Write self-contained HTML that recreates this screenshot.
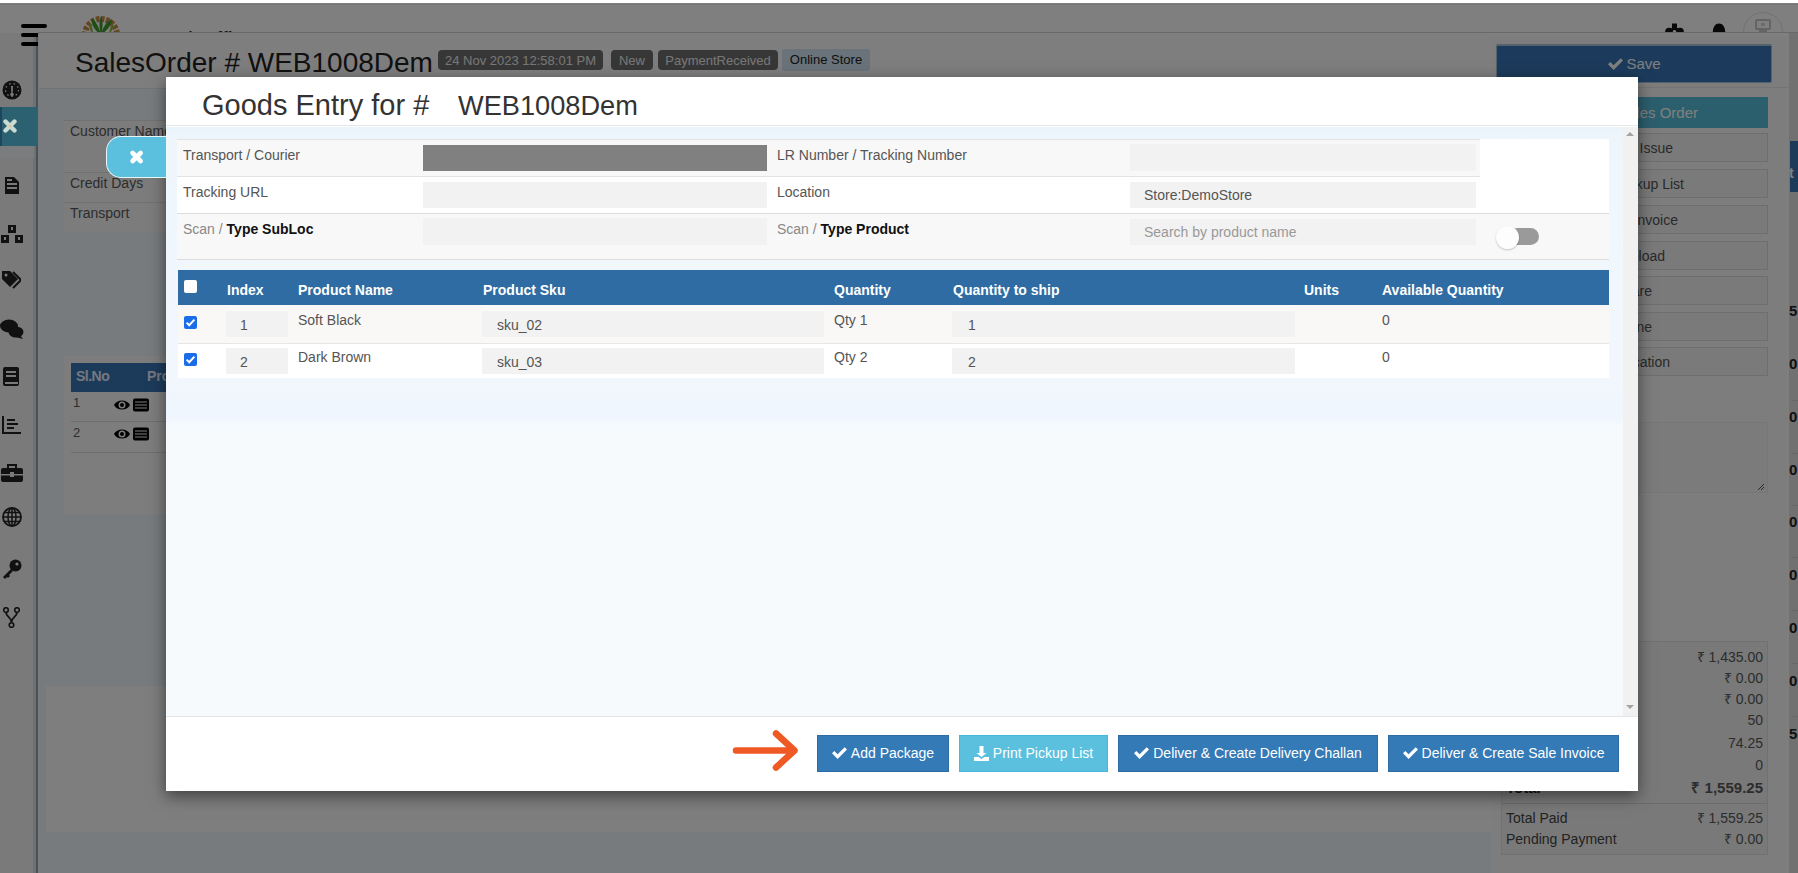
<!DOCTYPE html>
<html><head><meta charset="utf-8">
<style>
*{box-sizing:border-box;margin:0;padding:0}
html,body{width:1798px;height:873px;overflow:hidden;background:#fff;font-family:"Liberation Sans",sans-serif;color:#333}
.a{position:absolute}
#scr{position:absolute;left:0;top:0;width:1798px;height:873px;background:#fff;overflow:hidden}
/* background app: coordinates relative to screen (top:3) */
#ov{position:absolute;left:0;top:3px;width:1798px;height:870px;background:rgba(0,0,0,.5)}
#modal{position:absolute;left:166px;top:77px;width:1472px;height:714px;background:#fff;box-shadow:0 5px 15px rgba(0,0,0,.5)}
.lbl{font-size:14px;color:#555;white-space:nowrap;line-height:17px}
.inp{background:#f2f2f2;font-size:14px;color:#555;white-space:nowrap;line-height:17px}
.th{font-size:14px;font-weight:bold;color:#fff;white-space:nowrap;line-height:17px}
.td{font-size:14px;color:#555;white-space:nowrap;line-height:17px}
.cb{width:13px;height:13px;background:#1a6ce8;border-radius:2px}
.btn{height:37px;border:1px solid;color:#fff;font-size:14px;line-height:17px;white-space:nowrap;display:flex;align-items:center;justify-content:center}
.ck{font-size:14px}
.dl{display:inline-block;width:14px;height:14px;margin-right:3px}
.badge{height:20px;background:#6f6f6f;color:#eee;border-radius:4px;font-size:13px;line-height:22px;text-align:center;white-space:nowrap}
.bgt{font-size:14px;color:#5a5a5a;white-space:nowrap;line-height:17px}
.rb{left:1500px;width:268px;height:29px;background:#f4f4f4;border:1px solid #ddd;font-size:14px;color:#555;white-space:nowrap}
.rb span{position:absolute;top:6px}
.frn{left:1789px;font-size:15px;font-weight:bold;color:#222;line-height:17px}
.sv{right:35px;font-size:14px;color:#5a5a5a;white-space:nowrap;line-height:17px;text-align:right}
</style></head>
<body>
<div id="scr">
<!-- sidebar -->
<div class="a" style="left:0;top:0;width:39px;height:873px;background:#f4f4f4"></div>
<div class="a" style="left:33px;top:33px;width:3px;height:840px;background:#dce3e8"></div>
<div class="a" style="left:36px;top:33px;width:2px;height:840px;background:#9ba3a8"></div>
<!-- top header -->
<div class="a" style="left:0;top:0;width:1798px;height:33px;background:#fefefe"></div>
<div class="a" style="left:0;top:4px;width:1798px;height:1px;background:#ececec"></div>
<div class="a" style="left:21px;top:24px;width:26px;height:4px;background:#000;border-radius:2px"></div>
<div class="a" style="left:21px;top:33px;width:26px;height:4px;background:#000;border-radius:2px"></div>
<div class="a" style="left:21px;top:42px;width:26px;height:4px;background:#000;border-radius:2px"></div>
<!-- logo -->
<svg class="a" style="left:81px;top:15px" width="40" height="20" viewBox="0 0 40 20">
 <path d="M4 20A16 16 0 0 1 36 20" stroke="#c88a48" stroke-width="6" fill="none" stroke-dasharray="3.5 1.5"/>
 <path d="M20 20C13 15 10 9 11 3C15 7 18 12 20 20ZM20 20C27 15 31 9 31 4C25 7 22 12 20 20ZM20 20C18 13 18 6 20 1C22 6 22 13 20 20Z" fill="#3f9a2c"/>
 <path d="M12 20C9 16 8 12 9 8C11 11 12 15 12 20ZM28 20C31 16 33 12 32 8C30 11 28 15 28 20Z" fill="#8db83a"/>
</svg>
<div class="a" style="left:150px;top:27px;font-size:22px;color:#222;white-space:nowrap">BackOffice</div>
<!-- right header icons -->
<svg class="a" style="left:1665px;top:23px" width="19" height="12" viewBox="0 0 19 12"><circle cx="4" cy="8.5" r="3.8" fill="#111"/><circle cx="15" cy="8.5" r="3.8" fill="#111"/><rect x="7" y="0.5" width="5" height="6" fill="#111"/><path d="M4 8.5L9.5 5L15 8.5" stroke="#111" stroke-width="3" fill="none"/></svg>
<svg class="a" style="left:1712px;top:23px" width="14" height="12" viewBox="0 0 14 12"><path d="M7 0.5C3 0.5 1.5 4 1 7L0.5 11H13.5L13 7C12.5 4 11 0.5 7 0.5Z" fill="#111"/></svg>
<div class="a" style="left:1743px;top:12px;width:40px;height:40px;border-radius:50%;border:1px solid #e4e4e4"></div>
<svg class="a" style="left:1755px;top:19px" width="16" height="14" viewBox="0 0 16 14"><rect x="1" y="1" width="14" height="9" rx="1" fill="none" stroke="#c8c8c8" stroke-width="2"/><rect x="6" y="4" width="4" height="3" fill="#d8d8d8"/><rect x="4" y="11" width="8" height="2" fill="#c8c8c8"/></svg>

<!-- sidebar icons -->
<svg class="a" style="left:2px;top:80px" width="20" height="20" viewBox="0 0 20 20"><circle cx="10" cy="10" r="9.5" fill="#222"/><circle cx="10" cy="10" r="6.5" fill="none" stroke="#f4f4f4" stroke-width="1.2" stroke-dasharray="1.5 3"/><path d="M9 6L11 6L10.6 14L9.4 14Z" fill="#f4f4f4"/><circle cx="10" cy="14.5" r="1.8" fill="#f4f4f4"/></svg>
<div class="a" style="left:0;top:107px;width:39px;height:39px;background:#58c2e2"></div>
<div class="a" style="left:0;top:107px;width:2px;height:39px;background:#3c8dbc"></div>
<div class="a" style="left:0;top:146px;width:34px;height:12px;background:#f6f8fb"></div>
<svg class="a" style="left:4px;top:176px" width="16" height="19" viewBox="0 0 16 19"><path d="M1 1H10L15 6V18H1Z" fill="#222"/><rect x="3" y="7" width="10" height="2" fill="#f4f4f4"/><rect x="3" y="11" width="10" height="2" fill="#f4f4f4"/><rect x="3" y="3" width="5" height="2" fill="#f4f4f4"/></svg>
<svg class="a" style="left:1px;top:225px" width="22" height="18" viewBox="0 0 22 18"><rect x="7" y="0" width="8" height="8" fill="#222"/><rect x="0" y="10" width="8" height="8" fill="#222"/><rect x="14" y="10" width="8" height="8" fill="#222"/><rect x="10" y="2" width="2" height="3" fill="#f4f4f4"/><rect x="3" y="12" width="2" height="3" fill="#f4f4f4"/><rect x="17" y="12" width="2" height="3" fill="#f4f4f4"/></svg>
<svg class="a" style="left:2px;top:271px" width="19" height="18" viewBox="0 0 19 18"><path d="M0 0H8L16 8L8 16L0 8Z" fill="#222"/><path d="M11 1L19 9L11 17" stroke="#222" stroke-width="2" fill="none"/><circle cx="4" cy="4" r="1.5" fill="#f4f4f4"/></svg>
<svg class="a" style="left:0px;top:319px" width="24" height="20" viewBox="0 0 24 20"><ellipse cx="9" cy="7" rx="9" ry="6.5" fill="#222"/><ellipse cx="16" cy="13" rx="7.5" ry="5.5" fill="#222"/><path d="M20 16L23 20L16 18Z" fill="#222"/></svg>
<svg class="a" style="left:3px;top:367px" width="17" height="20" viewBox="0 0 17 20"><rect x="0" y="0" width="16" height="19" rx="2" fill="#222"/><rect x="3" y="4" width="10" height="2" fill="#f4f4f4"/><rect x="3" y="8" width="10" height="2" fill="#f4f4f4"/><rect x="2" y="15" width="13" height="2" fill="#f4f4f4"/></svg>
<svg class="a" style="left:2px;top:416px" width="19" height="18" viewBox="0 0 19 18"><path d="M1 0V17H19" stroke="#222" stroke-width="2" fill="none"/><rect x="5" y="3" width="8" height="2" fill="#222"/><rect x="5" y="7" width="11" height="2" fill="#222"/><rect x="5" y="11" width="7" height="2" fill="#222"/></svg>
<svg class="a" style="left:1px;top:464px" width="22" height="18" viewBox="0 0 22 18"><path d="M7 4V1H15V4" stroke="#222" stroke-width="2" fill="none"/><rect x="0" y="4" width="22" height="14" rx="2" fill="#222"/><rect x="0" y="10" width="22" height="1.5" fill="#f4f4f4"/><rect x="9" y="8" width="4" height="5" fill="#f4f4f4"/></svg>
<svg class="a" style="left:2px;top:507px" width="20" height="20" viewBox="0 0 20 20"><circle cx="10" cy="10" r="9" fill="none" stroke="#222" stroke-width="1.8"/><ellipse cx="10" cy="10" rx="4" ry="9" fill="none" stroke="#222" stroke-width="1.5"/><path d="M1 10H19M2.5 5.5H17.5M2.5 14.5H17.5M10 1V19" stroke="#222" stroke-width="1.5"/></svg>
<svg class="a" style="left:2px;top:559px" width="20" height="20" viewBox="0 0 20 20"><circle cx="13.5" cy="6.5" r="6" fill="#222"/><path d="M9 10L1 18L3 20L5 18L6 19L8 17L7 16L11 12Z" fill="#222"/><circle cx="15" cy="5" r="1.6" fill="#f4f4f4"/></svg>
<svg class="a" style="left:3px;top:607px" width="17" height="21" viewBox="0 0 17 21"><circle cx="3" cy="3" r="2.3" fill="none" stroke="#222" stroke-width="1.6"/><circle cx="14" cy="3" r="2.3" fill="none" stroke="#222" stroke-width="1.6"/><circle cx="8.5" cy="18" r="2.3" fill="none" stroke="#222" stroke-width="1.6"/><path d="M3 5.5C3 10 8.5 10 8.5 15.5M14 5.5C14 10 8.5 10 8.5 15.5" stroke="#222" stroke-width="1.8" fill="none"/></svg>

<!-- content bg -->
<div class="a" style="left:38px;top:33px;width:1760px;height:840px;background:#eff6fc"></div>
<div class="a" style="left:38px;top:32px;width:1760px;height:2px;background:#d2d2d2"></div>
<div class="a" style="left:38px;top:34px;width:1760px;height:1px;background:#fff"></div>
<!-- title bar -->
<div class="a" style="left:39px;top:33px;width:1452px;height:56px;background:#fdfdfd;border-bottom:1px solid #e6e6e6"></div>
<div class="a" style="left:75px;top:47px;font-size:28px;color:#222;white-space:nowrap;letter-spacing:0">SalesOrder # WEB1008Dem</div>
<div class="a badge" style="left:438px;top:50px;width:165px">24 Nov 2023 12:58:01 PM</div>
<div class="a badge" style="left:611px;top:50px;width:42px">New</div>
<div class="a badge" style="left:658px;top:50px;width:120px">PaymentReceived</div>
<div class="a" style="left:782px;top:49px;width:88px;height:22px;background:#d2e6f2;color:#222;border-radius:3px;font-size:13px;line-height:22px;text-align:center;white-space:nowrap">Online Store</div>

<!-- customer panel -->
<div class="a" style="left:64px;top:120px;width:1420px;height:112px;background:#f8f8f8"></div>
<div class="a" style="left:64px;top:120px;width:1420px;height:1px;background:#e2e2e2"></div>
<div class="a bgt" style="left:70px;top:123px">Customer Name</div>
<div class="a" style="left:64px;top:172px;width:1420px;height:1px;background:#e2e2e2"></div>
<div class="a bgt" style="left:70px;top:175px">Credit Days</div>
<div class="a" style="left:64px;top:202px;width:1420px;height:1px;background:#e2e2e2"></div>
<div class="a bgt" style="left:70px;top:205px">Transport</div>

<!-- table panel -->
<div class="a" style="left:64px;top:356px;width:1420px;height:158px;background:#fbfbfb"></div>
<div class="a" style="left:71px;top:363px;width:1400px;height:29px;background:#3876b6"></div>
<div class="a" style="left:76px;top:368px;font-size:14px;font-weight:bold;color:#e8f0ff;line-height:17px;letter-spacing:-0.5px">Sl.No</div>
<div class="a" style="left:147px;top:368px;font-size:14px;font-weight:bold;color:#e8f0ff;line-height:17px">Product</div>
<div class="a bgt" style="left:73px;top:394px;font-size:13px">1</div>
<div class="a bgt" style="left:73px;top:424px;font-size:13px">2</div>
<div class="a" style="left:71px;top:421px;width:1400px;height:1px;background:#ddd"></div>
<div class="a" style="left:71px;top:452px;width:1400px;height:1px;background:#ddd"></div>
<svg class="a" style="left:114px;top:398px" width="36" height="14" viewBox="0 0 36 14"><path d="M0 7C3 1 13 1 16 7C13 13 3 13 0 7Z" fill="#000"/><circle cx="8" cy="7" r="3.5" fill="#f8f8f8"/><circle cx="8" cy="7" r="2" fill="#000"/><rect x="19" y="0.5" width="16" height="13" rx="2" fill="#000"/><path d="M21 4H33M21 7H33M21 10H33" stroke="#f8f8f8" stroke-width="1.2"/></svg>
<svg class="a" style="left:114px;top:427px" width="36" height="14" viewBox="0 0 36 14"><path d="M0 7C3 1 13 1 16 7C13 13 3 13 0 7Z" fill="#000"/><circle cx="8" cy="7" r="3.5" fill="#f8f8f8"/><circle cx="8" cy="7" r="2" fill="#000"/><rect x="19" y="0.5" width="16" height="13" rx="2" fill="#000"/><path d="M21 4H33M21 7H33M21 10H33" stroke="#f8f8f8" stroke-width="1.2"/></svg>

<div class="a" style="left:46px;top:686px;width:1445px;height:146px;background:#fdfdfd"></div>
<!-- right panel -->
<div class="a" style="left:1491px;top:33px;width:298px;height:840px;background:#fbfbfb"></div>
<div class="a" style="left:1787px;top:33px;width:2px;height:840px;background:#fdfdfd"></div><div class="a" style="left:1789px;top:33px;width:9px;height:840px;background:#e2e2e2"></div><div class="a" style="left:1791px;top:400px;width:7px;height:1px;background:#cfcfcf"></div><div class="a" style="left:1791px;top:453px;width:7px;height:1px;background:#cfcfcf"></div><div class="a" style="left:1791px;top:505px;width:7px;height:1px;background:#cfcfcf"></div><div class="a" style="left:1791px;top:557px;width:7px;height:1px;background:#cfcfcf"></div><div class="a" style="left:1791px;top:610px;width:7px;height:1px;background:#cfcfcf"></div><div class="a" style="left:1791px;top:663px;width:7px;height:1px;background:#cfcfcf"></div><div class="a" style="left:1791px;top:716px;width:7px;height:1px;background:#cfcfcf"></div>
<div class="a" style="left:1491px;top:33px;width:298px;height:55px;border-top:3px solid #fff;border-bottom:1px solid #e8e8e8"></div>
<div class="a" style="left:1496px;top:44px;width:276px;height:39px;border:2px solid #a8c4dc;border-radius:2px"></div>
<div class="a" style="left:1497px;top:46px;width:274px;height:36px;background:#3977b8;color:#fff;font-size:15px;line-height:18px;display:flex;align-items:center;justify-content:center;padding-left:1px"><svg width="15" height="12" viewBox="0 0 15 12" style="margin-right:3px"><path d="M0 6.3L2.3 4L5.6 7.3L12.7 0.2L15 2.5L5.6 11.9Z" fill="#fff"/></svg>Save</div>
<div class="a" style="left:1500px;top:97px;width:268px;height:31px;background:#58bfdc;color:#fff;font-size:15px;line-height:31px;text-align:center;white-space:nowrap"><span style="position:absolute;right:70px;top:0">Sales Order</span></div>
<div class="a rb" style="top:133px"><span style="right:94px">Goods Issue</span></div>
<div class="a rb" style="top:169px"><span style="right:83px">Print Pickup List</span></div>
<div class="a rb" style="top:205px"><span style="right:89px">Sale Invoice</span></div>
<div class="a rb" style="top:241px"><span style="right:102px">Upload</span></div>
<div class="a rb" style="top:276px"><span style="right:115px">Share</span></div>
<div class="a rb" style="top:312px"><span style="right:115px">Phone</span></div>
<div class="a rb" style="top:347px"><span style="right:97px">Duplication</span></div>
<div class="a" style="left:1500px;top:422px;width:268px;height:71px;background:#f6f6f6;border:1px solid #eee"></div>
<svg class="a" style="left:1757px;top:483px" width="8" height="8" viewBox="0 0 8 8"><path d="M1 7L7 1M4 7L7 4" stroke="#555" stroke-width="1"/></svg>

<!-- far right column -->
<div class="a" style="left:1790px;top:141px;width:8px;height:51px;background:#3876b6"></div>
<div class="a" style="left:1789px;top:165px;font-size:14px;font-weight:bold;color:#fff">t</div>
<div class="a frn" style="top:302px">5</div>
<div class="a frn" style="top:355px">0</div>
<div class="a frn" style="top:408px">0</div>
<div class="a frn" style="top:461px">0</div>
<div class="a frn" style="top:513px">0</div>
<div class="a frn" style="top:566px">0</div>
<div class="a frn" style="top:619px">0</div>
<div class="a frn" style="top:672px">0</div>
<div class="a frn" style="top:725px">5</div>

<!-- summary box -->
<div class="a" style="left:1501px;top:641px;width:267px;height:214px;background:#f2f2f2;border:1px solid #e2e2e2"></div>
<div class="a sv" style="top:649px">&#8377; 1,435.00</div>
<div class="a sv" style="top:670px">&#8377; 0.00</div>
<div class="a sv" style="top:691px">&#8377; 0.00</div>
<div class="a sv" style="top:712px">50</div>
<div class="a sv" style="top:735px">74.25</div>
<div class="a sv" style="top:757px">0</div>
<div class="a sv" style="top:779px;font-weight:bold;font-size:15px">&#8377; 1,559.25</div>
<div class="a" style="left:1506px;top:779px;font-size:15px;font-weight:bold;color:#222">Total</div>
<div class="a" style="left:1502px;top:803px;width:265px;height:1px;background:#d8d8d8"></div>
<div class="a" style="left:1506px;top:810px;font-size:14px;color:#444">Total Paid</div>
<div class="a sv" style="top:810px">&#8377; 1,559.25</div>
<div class="a" style="left:1506px;top:831px;font-size:14px;color:#444">Pending Payment</div>
<div class="a sv" style="top:831px">&#8377; 0.00</div>
</div>
<div id="ov"></div>
<svg class="a" style="left:3px;top:119px" width="14" height="14" viewBox="0 0 14 14"><path d="M2.5 2.5L11.5 11.5M11.5 2.5L2.5 11.5" stroke="#c9dbd3" stroke-width="4.4" stroke-linecap="round"/><circle cx="7" cy="7" r="1.6" fill="#d8c8a0"/></svg>
<div id="modal">

<div class="a" style="left:0;top:0;width:1472px;height:49px;border-bottom:1px solid #e5e5e5;background:#fff"></div>
<div class="a" style="left:36px;top:12px;font-size:29px;color:#333;white-space:nowrap">Goods Entry for #</div>
<div class="a" style="left:292px;top:13px;font-size:27.2px;color:#333;white-space:nowrap">WEB1008Dem</div>
<!-- body -->
<div class="a" style="left:0;top:50px;width:1457px;height:589px;background:#f6fafd"></div>
<div class="a" style="left:0;top:50px;width:1457px;height:300px;background:linear-gradient(#eaf4fb,#eef6fc 12px,#f2f7fd 250px,#eff6fd 290px,#f6fafd)"></div>
<!-- scrollbar -->
<div class="a" style="left:1457px;top:50px;width:15px;height:589px;background:#f1f1f1"></div>
<div class="a" style="left:1460px;top:55px;width:0;height:0;border-left:4px solid transparent;border-right:4px solid transparent;border-bottom:4px solid #a3a3a3"></div>
<div class="a" style="left:1460px;top:628px;width:0;height:0;border-left:4px solid transparent;border-right:4px solid transparent;border-top:4px solid #a3a3a3"></div>
<div class="a" style="left:0;top:639px;width:1472px;height:1px;background:#e5e5e5"></div>

<!-- form table -->
<div class="a" style="left:11px;top:62px;width:1303px;height:37px;background:#f8f8f8;border-top:1px solid #e3e3e3"></div>
<div class="a" style="left:1314px;top:62px;width:129px;height:74px;background:#fff"></div>
<div class="a" style="left:11px;top:99px;width:1303px;height:1px;background:#e3e3e3"></div>
<div class="a" style="left:11px;top:100px;width:1303px;height:36px;background:#fff"></div>
<div class="a" style="left:11px;top:136px;width:1432px;height:1px;background:#dcdcdc"></div>
<div class="a" style="left:11px;top:137px;width:1432px;height:45px;background:#f8f8f8"></div>
<div class="a" style="left:11px;top:182px;width:1432px;height:1px;background:#dcdcdc"></div>

<div class="a lbl" style="left:17px;top:70px">Transport / Courier</div>
<div class="a lbl" style="left:17px;top:107px">Tracking URL</div>
<div class="a lbl" style="left:17px;top:144px"><span style="color:#888">Scan /</span> <b style="color:#111">Type SubLoc</b></div>
<div class="a lbl" style="left:611px;top:70px">LR Number / Tracking Number</div>
<div class="a lbl" style="left:611px;top:107px">Location</div>
<div class="a lbl" style="left:611px;top:144px"><span style="color:#888">Scan /</span> <b style="color:#111">Type Product</b></div>

<div class="a" style="left:257px;top:68px;width:344px;height:26px;background:#808080"></div>
<div class="a inp" style="left:257px;top:105px;width:344px;height:26px"></div>
<div class="a inp" style="left:257px;top:141px;width:344px;height:27px"></div>
<div class="a inp" style="left:964px;top:67px;width:346px;height:27px"></div>
<div class="a inp" style="left:964px;top:105px;width:346px;height:26px"><span style="position:absolute;left:14px;top:5px">Store:DemoStore</span></div>
<div class="a inp" style="left:964px;top:142px;width:346px;height:26px"><span style="position:absolute;left:14px;top:5px;color:#999">Search by product name</span></div>
<!-- toggle -->
<div class="a" style="left:1343px;top:151px;width:30px;height:17px;border-radius:9px;background:#9a9a9a"></div>
<div class="a" style="left:1330px;top:149px;width:23px;height:23px;border-radius:50%;background:#fdfdfd;box-shadow:0 1px 2px rgba(0,0,0,.22)"></div>

<!-- product table -->
<div class="a" style="left:12px;top:193px;width:1431px;height:35px;background:#2e6ca3"></div>
<div class="a" style="left:18px;top:203px;width:13px;height:13px;background:#fff;border-radius:2px"></div>
<div class="a th" style="left:61px;top:205px">Index</div>
<div class="a th" style="left:132px;top:205px">Product Name</div>
<div class="a th" style="left:317px;top:205px">Product Sku</div>
<div class="a th" style="left:668px;top:205px">Quantity</div>
<div class="a th" style="left:787px;top:205px">Quantity to ship</div>
<div class="a th" style="left:1138px;top:205px">Units</div>
<div class="a th" style="left:1216px;top:205px">Available Quantity</div>

<div class="a" style="left:12px;top:228px;width:1431px;height:38px;background:#faf8f7"></div>
<div class="a" style="left:12px;top:266px;width:1431px;height:1px;background:#e6e6e6"></div>
<div class="a" style="left:12px;top:267px;width:1431px;height:34px;background:#fff"></div>

<div class="a cb" style="left:18px;top:239px"><svg width="13" height="13" viewBox="0 0 13 13" style="position:absolute;left:0;top:0"><path d="M2.6 6.6L5.2 9.2L10.4 3.6" stroke="#fff" stroke-width="2" fill="none"/></svg></div>
<div class="a cb" style="left:18px;top:276px"><svg width="13" height="13" viewBox="0 0 13 13" style="position:absolute;left:0;top:0"><path d="M2.6 6.6L5.2 9.2L10.4 3.6" stroke="#fff" stroke-width="2" fill="none"/></svg></div>
<div class="a inp" style="left:60px;top:234px;width:62px;height:26px"><span style="position:absolute;left:14px;top:6px">1</span></div>
<div class="a inp" style="left:60px;top:271px;width:62px;height:26px"><span style="position:absolute;left:14px;top:6px">2</span></div>
<div class="a td" style="left:132px;top:235px">Soft Black</div>
<div class="a td" style="left:132px;top:272px">Dark Brown</div>
<div class="a inp" style="left:316px;top:234px;width:342px;height:26px"><span style="position:absolute;left:15px;top:6px">sku_02</span></div>
<div class="a inp" style="left:316px;top:271px;width:342px;height:26px"><span style="position:absolute;left:15px;top:6px">sku_03</span></div>
<div class="a td" style="left:668px;top:235px">Qty 1</div>
<div class="a td" style="left:668px;top:272px">Qty 2</div>
<div class="a inp" style="left:786px;top:234px;width:343px;height:26px"><span style="position:absolute;left:16px;top:6px">1</span></div>
<div class="a inp" style="left:786px;top:271px;width:343px;height:26px"><span style="position:absolute;left:16px;top:6px">2</span></div>
<div class="a td" style="left:1216px;top:235px">0</div>
<div class="a td" style="left:1216px;top:272px">0</div>

<!-- footer -->
<svg class="a" style="left:566px;top:653px" width="68" height="42" viewBox="0 0 68 42"><path d="M4 20.5H61M44 3.5L62.5 20.5L44 37.5" stroke="#ef5a24" stroke-width="6.5" stroke-linecap="round" stroke-linejoin="round" fill="none"/></svg>
<div class="a btn" style="left:651px;top:658px;width:132px;background:#337ab7;border-color:#2e6da4"><svg width="15" height="12" viewBox="0 0 15 12" style="margin-right:4px;margin-top:-1px"><path d="M0 6.3L2.3 4L5.6 7.3L12.7 0.2L15 2.5L5.6 11.9Z" fill="#fff"/></svg>Add Package</div>
<div class="a btn" style="left:793px;top:658px;width:149px;background:#5bc0de;border-color:#46b8da"><svg width="15" height="15" viewBox="0 0 15 15" style="margin-right:4px;margin-top:-1px"><path d="M5.5 0H9.5V7H12.5L7.5 11L2.5 7H5.5Z" fill="#fff"/><path d="M0 11H4.5L7.5 13L10.5 11H15V15H0Z" fill="#fff"/></svg>Print Pickup List</div>
<div class="a btn" style="left:952px;top:658px;width:260px;background:#337ab7;border-color:#2e6da4"><svg width="15" height="12" viewBox="0 0 15 12" style="margin-right:4px;margin-top:-1px"><path d="M0 6.3L2.3 4L5.6 7.3L12.7 0.2L15 2.5L5.6 11.9Z" fill="#fff"/></svg>Deliver &amp; Create Delivery Challan</div>
<div class="a btn" style="left:1222px;top:658px;width:231px;background:#337ab7;border-color:#2e6da4"><svg width="15" height="12" viewBox="0 0 15 12" style="margin-right:4px;margin-top:-1px"><path d="M0 6.3L2.3 4L5.6 7.3L12.7 0.2L15 2.5L5.6 11.9Z" fill="#fff"/></svg>Deliver &amp; Create Sale Invoice</div>
</div>
<div class="a" style="left:106px;top:136px;width:60px;height:42px;border-radius:15px 0 0 15px;background:#5bc0de;border:1.5px solid #e6f7fb;border-right:none"></div>
<svg class="a" style="left:128px;top:148px" width="17" height="17" viewBox="0 0 17 17"><path d="M4.6 5L12.6 13M12.6 5L4.6 13" stroke="#fff" stroke-width="4.6" stroke-linecap="round"/></svg>
</body></html>
